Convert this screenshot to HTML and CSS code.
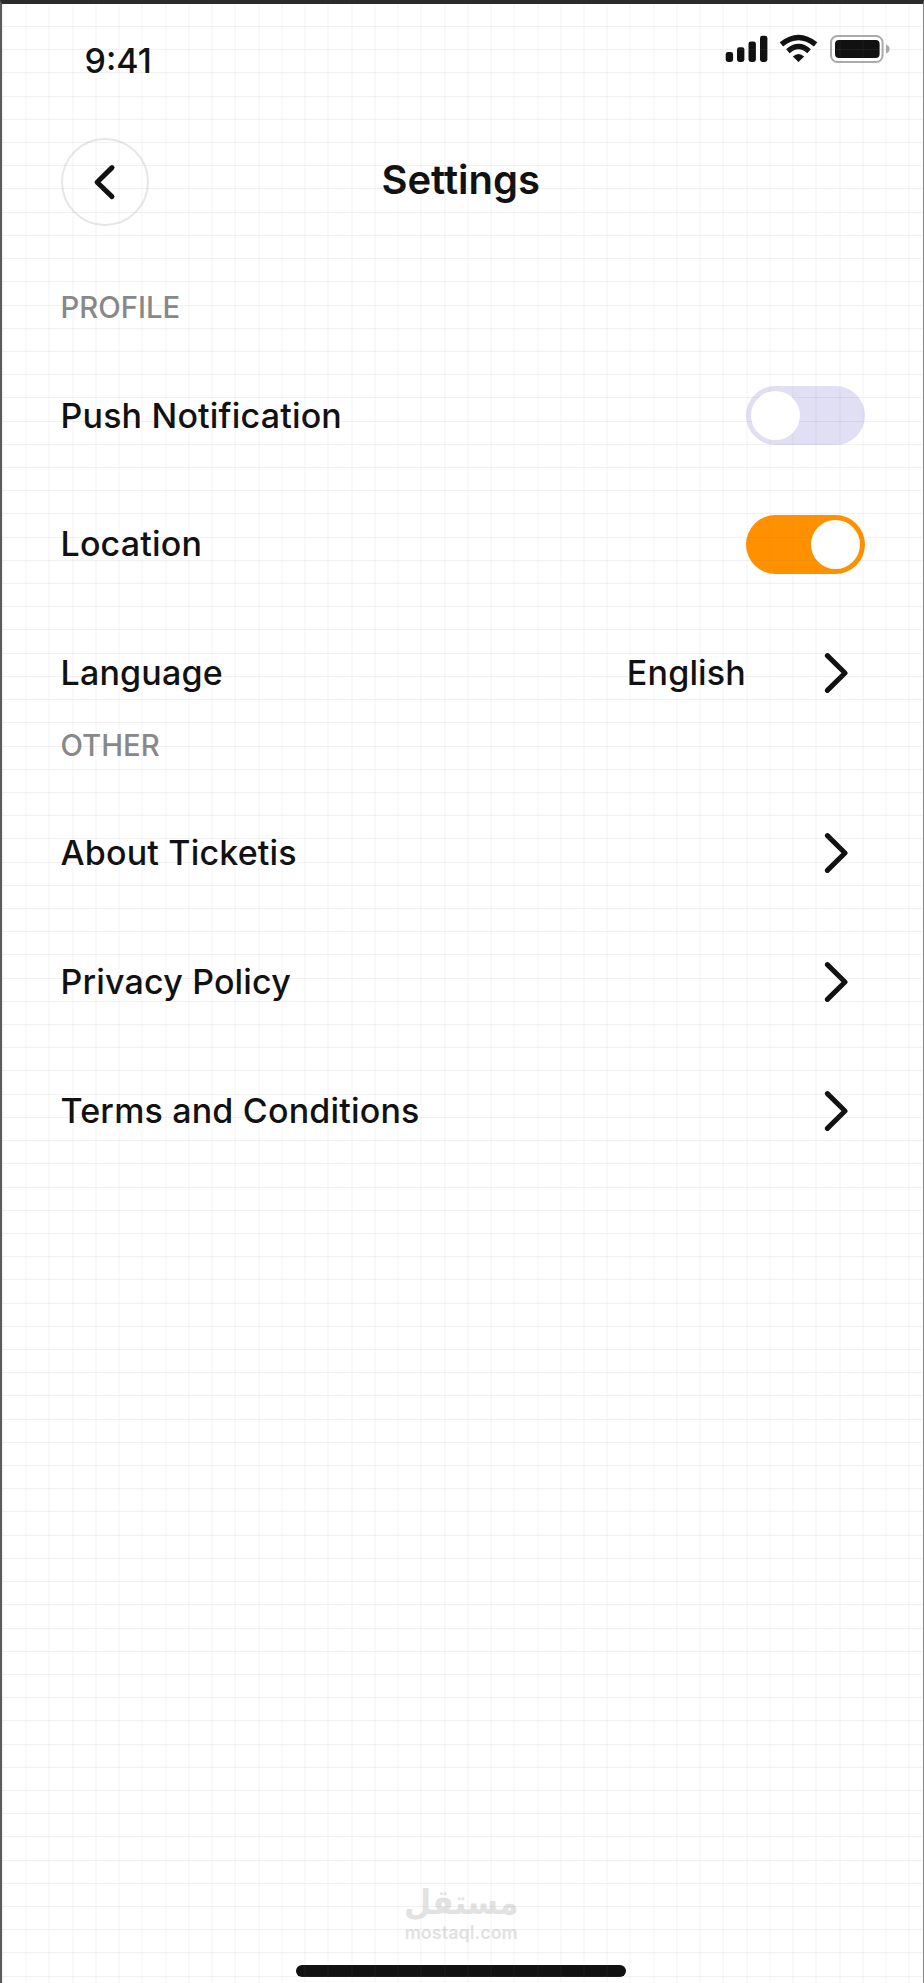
FILE: index.html
```html
<!DOCTYPE html>
<html lang="en">
<head>
	<meta charset="UTF-8">
	<title>Settings</title>
	<link rel="stylesheet" href="styles.css">
</head>
<body>
	<div class="screen">
		<!-- status bar -->
		<div class="status">
			<span class="time">9:41</span>
			<svg class="status-icons" width="166" height="30" viewBox="0 0 166 30">
				<g fill="#111">
					<rect x="0.7" y="18" width="7.4" height="10" rx="2.4"/>
					<rect x="12" y="13.2" width="7.4" height="14.8" rx="2.4"/>
					<rect x="23.5" y="7.4" width="7.4" height="20.6" rx="2.4"/>
					<rect x="35" y="1.8" width="7.4" height="26.2" rx="2.4"/>
					<path d="M73.5 28 L67.8 22.4 Q73.5 17.4 79.2 22.4 Z"/>
				</g>
				<g fill="none" stroke="#111" stroke-width="5.4">
					<path d="M56.4 10.4 Q73.5 -3.4 90.6 10.4"/>
					<path d="M62.9 17.2 Q73.5 7.8 84.1 17.2"/>
				</g>
				<rect x="106" y="2" width="51.6" height="26" rx="6.5" fill="none" stroke="#aaa" stroke-width="2"/>
				<rect x="110" y="6" width="44.6" height="18" rx="4" fill="#111"/>
				<path d="M161 10.4 Q164.6 11.6 164.6 15 T161 19.6 Z" fill="#aaa"/>
			</svg>
		</div>

		<div class="header">
			<a href="javascript:;" class="back">
				<svg width="24" height="40" viewBox="0 0 24 40" fill="none" stroke="#111" stroke-width="5" stroke-linecap="round" stroke-linejoin="round">
					<path d="M19 5.6 L4.1 20.2 L19 34.6"/>
				</svg>
			</a>
			<h1 class="title">Settings</h1>
		</div>

		<h2 class="group">PROFILE</h2>
		<div class="list">
			<div class="row">
				<span class="label">Push Notification</span>
				<span class="toggle"><i class="knob"></i></span>
			</div>
			<div class="row">
				<span class="label">Location</span>
				<span class="toggle on"><i class="knob"></i></span>
			</div>
			<div class="row">
				<span class="label">Language</span>
				<span class="value">English</span>
				<svg class="arrow" viewBox="0 0 24 42"><path d="M3.4 3.6 L21 21 L3.4 38.4"/></svg>
			</div>
		</div>

		<h2 class="group other">OTHER</h2>
		<div class="list">
			<div class="row">
				<span class="label">About Ticketis</span>
				<svg class="arrow" viewBox="0 0 24 42"><path d="M3.4 3.6 L21 21 L3.4 38.4"/></svg>
			</div>
			<div class="row">
				<span class="label">Privacy Policy</span>
				<svg class="arrow" viewBox="0 0 24 42"><path d="M3.4 3.6 L21 21 L3.4 38.4"/></svg>
			</div>
			<div class="row">
				<span class="label">Terms and Conditions</span>
				<svg class="arrow" viewBox="0 0 24 42"><path d="M3.4 3.6 L21 21 L3.4 38.4"/></svg>
			</div>
		</div>

		<div class="footer">
			<div class="brand">
				<span class="brand-ar" lang="ar">مستقل</span>
				<span class="brand-en">mostaql.com</span>
			</div>
			<div class="home"></div>
		</div>

		<div class="grid"></div>
	</div>
</body>
</html>
```
FILE: styles.css
```css
* {
	box-sizing: border-box;
}
body {
	margin: 0;
	background: #fff;
	color: #111;
	font-family: Inter, "Liberation Sans", sans-serif;
}
.screen {
	position: relative;
	display: flex;
	flex-direction: column;
	width: 924px;
	height: 1983px;
	padding: 0 58px 0 58.5px;
	border-top: 4px solid #2b2b2b;
	border-left: 2px solid #5a5a5a;
	border-right: 1px solid #888;
	overflow: hidden;
}

/* faint grid drawn over everything but the knobs */
.grid {
	position: absolute;
	top: 0;
	left: 0;
	right: 0;
	bottom: 0;
	pointer-events: none;
	background:
		repeating-linear-gradient(to bottom, rgba(128,128,128,.11) 0, rgba(128,128,128,.11) 1px, transparent 1px, transparent 23.21px) 0 -1.2px / 100% 2000px,
		repeating-linear-gradient(to right, rgba(128,128,128,.09) 0, rgba(128,128,128,.09) 1px, transparent 1px, transparent 23.24px) .5px 0 / 1000px 100%;
}

.status {
	display: flex;
	justify-content: space-between;
	height: 134px;
	margin-right: -26px;
	padding: 30px 0 0 24px;
}
.time {
	padding-top: 6px;
	font-size: 34px;
	font-weight: 500;
	line-height: 42px;
}

.header {
	display: grid;
	grid-template-columns: 88px 1fr 88px;
	align-items: center;
	height: 88px;
}
.back {
	display: flex;
	align-items: center;
	justify-content: center;
	width: 88px;
	height: 88px;
	border: 2px solid #e6e6e6;
	border-radius: 50%;
}
.title {
	margin: 0 4px 5px 0;
	font-size: 40px;
	font-weight: 600;
	line-height: 48px;
	text-align: center;
}

.group {
	margin: 64px 0 60px;
	color: #888;
	font-size: 29.3px;
	font-weight: 500;
	line-height: 36px;
}
.group.other {
	margin: 26px 0 59.5px;
}

.list {
	display: flex;
	flex-direction: column;
	gap: 69.7px;
}
.row {
	display: flex;
	align-items: center;
	height: 59px;
	font-size: 34px;
	font-weight: 500;
	letter-spacing: .18px;
}
.label {
	flex: 1;
	padding-bottom: 1px;
}
.value {
	margin-right: 78px;
}
.arrow {
	width: 24px;
	height: 42px;
	margin-right: 17px;
	fill: none;
	stroke: #111;
	stroke-width: 5;
	stroke-linecap: round;
	stroke-linejoin: round;
}

.toggle {
	display: flex;
	align-items: center;
	width: 119px;
	height: 59px;
	padding: 0 5px;
	border-radius: 30px;
	background: #e0dff3;
}
.toggle.on {
	justify-content: flex-end;
	background: #ff9000;
}
.knob {
	position: relative;
	z-index: 1;
	width: 49px;
	height: 49px;
	border-radius: 50%;
	background: #fff;
}

.footer {
	display: flex;
	flex-direction: column;
	align-items: center;
	margin-top: auto;
	padding: 0 3px 6px 0;
}
.brand {
	display: flex;
	flex-direction: column;
	align-items: center;
	color: #e2e2e2;
}
.brand-ar {
	font-family: "DejaVu Sans", sans-serif;
	font-size: 34px;
	font-weight: 700;
	line-height: 40px;
	transform: scaleX(.92);
}
.brand-en {
	margin-bottom: 21px;
	font-size: 18px;
	font-weight: 600;
	line-height: 22px;
}
.home {
	width: 330px;
	height: 12px;
	border-radius: 6px;
	background: #111;
}
```
